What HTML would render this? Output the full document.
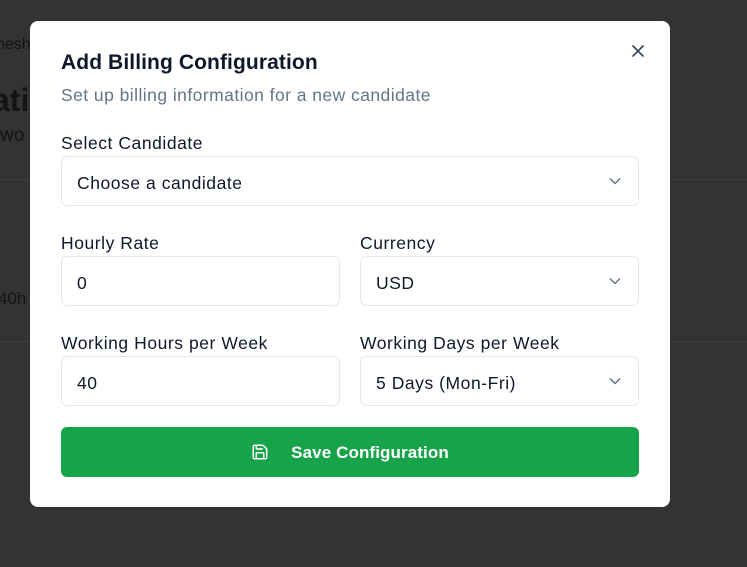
<!DOCTYPE html>
<html><head><style>
*{box-sizing:border-box;margin:0;padding:0}
body{width:747px;height:567px;background:#333333;font-family:"Liberation Sans",sans-serif;position:relative;overflow:hidden}
.bg{position:absolute;color:#141414}
.line{position:absolute;left:0;width:747px;height:1px;background:#3f3f3f}
.modal{position:absolute;left:30px;top:21px;width:640px;height:486px;background:#fff;border-radius:8px}
.t{position:absolute;left:31px;top:30px;font-size:21px;font-weight:bold;color:#0f172a;letter-spacing:0.1px}
.s{position:absolute;left:31px;top:64px;font-size:17.5px;color:#64748b;letter-spacing:0.45px}
.lab{position:absolute;font-size:17.5px;color:#0f172a;letter-spacing:0.55px}
.in{position:absolute;height:50px;border:1px solid #e2e8f0;border-radius:6px;font-size:17.5px;color:#0f172a;padding:0 15px;line-height:52px;letter-spacing:0.55px}
.chev{position:absolute;right:17px;top:20px}
.btn{position:absolute;left:31px;top:406px;width:578px;height:50px;background:#16a34a;border-radius:6px;color:#fff;font-weight:bold;font-size:17px;text-align:center;line-height:52px;letter-spacing:0.1px}
.x{position:absolute;left:601px;top:23px}
</style></head><body>
<div class="bg" style="left:-4px;top:36px;font-size:16px">nesh</div>
<div class="bg" style="left:-8px;top:82px;font-size:32px;font-weight:bold">atio</div>
<div class="bg" style="left:0;top:125px;font-size:19px">wo</div>
<div class="line" style="top:179px"></div>
<div class="bg" style="left:-2px;top:289px;font-size:17px">40h</div>
<div class="line" style="top:341px"></div>
<div class="modal">
<svg class="x" width="14" height="14" viewBox="0 0 14 14"><path d="M2 2L12 12M12 2L2 12" stroke="#334155" stroke-width="1.6" stroke-linecap="round"/></svg>
<div class="t">Add Billing Configuration</div>
<div class="s">Set up billing information for a new candidate</div>
<div class="lab" style="left:31px;top:112px">Select Candidate</div>
<div class="in" style="left:31px;top:135px;width:578px">Choose a candidate<svg class="chev" width="12" height="8" viewBox="0 0 12 8"><path d="M1 1.5L6 6.5L11 1.5" fill="none" stroke="#64748b" stroke-width="1.5"/></svg></div>
<div class="lab" style="left:31px;top:212px">Hourly Rate</div>
<div class="in" style="left:31px;top:235px;width:279px">0</div>
<div class="lab" style="left:330px;top:212px">Currency</div>
<div class="in" style="left:330px;top:235px;width:279px">USD<svg class="chev" width="12" height="8" viewBox="0 0 12 8"><path d="M1 1.5L6 6.5L11 1.5" fill="none" stroke="#64748b" stroke-width="1.5"/></svg></div>
<div class="lab" style="left:31px;top:312px">Working Hours per Week</div>
<div class="in" style="left:31px;top:335px;width:279px">40</div>
<div class="lab" style="left:330px;top:312px">Working Days per Week</div>
<div class="in" style="left:330px;top:335px;width:279px">5 Days (Mon-Fri)<svg class="chev" width="12" height="8" viewBox="0 0 12 8"><path d="M1 1.5L6 6.5L11 1.5" fill="none" stroke="#64748b" stroke-width="1.5"/></svg></div>
<div class="btn"><svg width="18" height="18" viewBox="0 0 24 24" style="vertical-align:-3px;margin-right:22px" fill="none" stroke="#fff" stroke-width="2" stroke-linecap="round" stroke-linejoin="round"><path d="M15.2 3a2 2 0 0 1 1.4.6l3.8 3.8a2 2 0 0 1 .6 1.4V19a2 2 0 0 1-2 2H5a2 2 0 0 1-2-2V5a2 2 0 0 1 2-2z"/><path d="M17 21v-7a1 1 0 0 0-1-1H8a1 1 0 0 0-1 1v7"/><path d="M7 3v4a1 1 0 0 0 1 1h7"/></svg>Save Configuration</div>
</div>
</body></html>
